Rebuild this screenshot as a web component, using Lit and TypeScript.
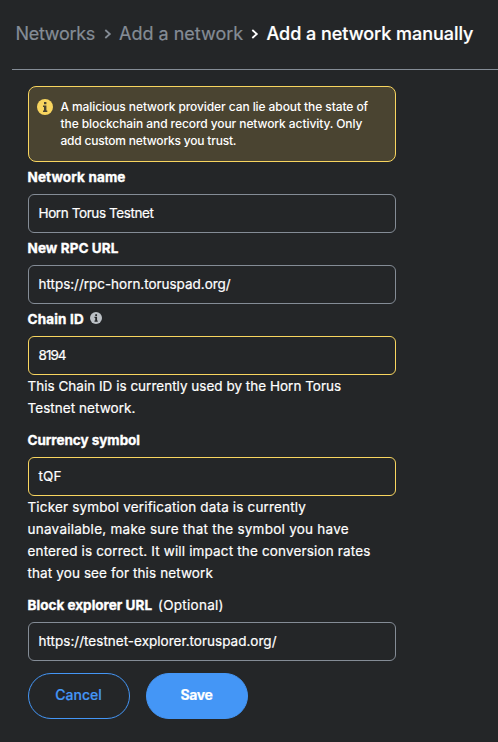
import { LitElement, html, css, svg, nothing } from "lit";

type Line = [text: string, tracking: number];

interface Field {
  label: Line;
  optional?: boolean;
  info?: boolean;
  warn?: boolean;
  value: Line;
  help?: Line[];
}

const notice: Line[] = [
  ["A malicious network provider can lie about the state of", -0.085],
  ["the blockchain and record your network activity. Only", -0.083],
  ["add custom networks you trust.", -0.2],
];

const fields: Field[] = [
  { label: ["Network name", 0.13], value: ["Horn Torus Testnet", -0.4] },
  { label: ["New RPC URL", 0.09], value: ["https://rpc-horn.toruspad.org/", -0.03] },
  {
    label: ["Chain ID", 0.18],
    info: true,
    warn: true,
    value: ["8194", -0.95],
    help: [
      ["This Chain ID is currently used by the Horn Torus", 0.01],
      ["Testnet network.", 0.05],
    ],
  },
  {
    label: ["Currency symbol", -0.04],
    warn: true,
    value: ["tQF", 0.1],
    help: [
      ["Ticker symbol verification data is currently", 0.16],
      ["unavailable, make sure that the symbol you have", 0.255],
      ["entered is correct. It will impact the conversion rates", 0.155],
      ["that you see for this network", 0.11],
    ],
  },
  {
    label: ["Block explorer URL", 0.02],
    optional: true,
    value: ["https://testnet-explorer.toruspad.org/", 0.01],
  },
];

const infoIcon = (cls: string) => html`<svg class=${cls} viewBox="0 0 16 16">
  ${svg`<circle class="disc" cx="8" cy="8" r="8"/><path class="mark" d="M7 3h2.4v2.2H7zM6 6.4h3.4v5h.9v1.7H6v-1.7h1V8H6z"/>`}
</svg>`;

const chevron = html`<svg class="chevron" viewBox="0 0 8 10">
  <path d="M1.3 1 5.8 5 1.3 9" fill="none" stroke="currentColor" stroke-width="1.8" />
</svg>`;

const line = ([text, tracking]: Line) =>
  html`<span class="line" style="letter-spacing:${tracking}px">${text}</span>`;

class AppRoot extends LitElement {
  static styles = css`
    :host {
      display: block;
      box-sizing: border-box;
      height: 742px;
      overflow: hidden;
      background: #242628;
      color: #fff;
      font: 400 13.5px/22px Inter, "Liberation Sans", sans-serif;
      -webkit-text-stroke: 0.2px currentColor;
    }
    .crumbs {
      display: flex;
      align-items: center;
      height: 69px;
      box-sizing: border-box;
      padding: 0 0 2px 15.5px;
      font-size: 18px;
      color: #848c96;
      white-space: nowrap;
    }
    .networks { width: 88px; letter-spacing: -0.29px; }
    .parent { width: 132px; letter-spacing: 0; }
    .current { color: #fff; font-weight: 500; letter-spacing: -0.04px; }
    .chevron { width: 8px; height: 10px; margin-right: 7.5px; flex: none; }
    .on { color: #fff; display: flex; }
    .rule { height: 1px; margin-left: 12px; background: #848c96; }
    .form { width: 368px; margin: 16px 0 0 28px; }
    .notice {
      display: flex;
      gap: 7.5px;
      box-sizing: border-box;
      height: 76px;
      padding: 11px 8px;
      border: 1px solid #f8d55f;
      border-radius: 8px;
      background: #4a4431;
      font-size: 12px;
      font-weight: 500;
      line-height: 17px;
      -webkit-text-stroke: 0;
    }
    .line { display: block; white-space: nowrap; }
    .notice-icon { width: 16px; height: 16px; margin-top: 1px; flex: none; }
    .notice-icon .disc { fill: #f8d55f; }
    .notice-icon .mark { fill: #4a4431; }
    .label {
      display: flex;
      height: 32px;
      box-sizing: border-box;
      padding-top: 4px;
      margin-left: -0.5px;
      font-weight: 700;
      -webkit-text-stroke: 0.35px currentColor;
    }
    .optional {
      margin-left: 6px;
      font-weight: 400;
      letter-spacing: 0.27px;
      -webkit-text-stroke: 0.2px currentColor;
    }
    .label-icon { width: 12px; height: 12px; margin: 4px 0 0 6.5px; }
    .label-icon .disc { fill: #bbc0c5; }
    .label-icon .mark { fill: #242628; }
    .box {
      height: 39px;
      box-sizing: border-box;
      padding-left: 9.5px;
      border: 1px solid #848c96;
      border-radius: 6px;
      line-height: 37px;
    }
    .warn { border-color: #f8d55f; }
    .help { padding-bottom: 6px; margin-left: -0.5px; }
    .actions { display: flex; gap: 16px; margin-top: 12px; }
    .button {
      width: 102px;
      height: 46px;
      box-sizing: border-box;
      border: 1px solid #4496f6;
      border-radius: 23px;
      background: none;
      color: #4496f6;
      font: 500 14px/42px Inter, "Liberation Sans", sans-serif;
      padding: 0 1px 2px 0;
      text-align: center;
    }
    .primary {
      background: #4496f6;
      color: #fff;
      font-weight: 700;
      letter-spacing: -0.35px;
    }
  `;

  render() {
    return html`
      <nav class="crumbs">
        <span class="networks">Networks</span>${chevron}
        <span class="parent">Add a network</span><span class="on">${chevron}</span>
        <span class="current">Add a network manually</span>
      </nav>
      <div class="rule"></div>
      <main class="form">
        <div class="notice">${infoIcon("notice-icon")}<div>${notice.map(line)}</div></div>
        ${fields.map(
          (f) => html`<div class="field">
            <div class="label">
              ${line(f.label)}
              ${f.optional ? html`<span class="optional">(Optional)</span>` : nothing}
              ${f.info ? infoIcon("label-icon") : nothing}
            </div>
            <div class="box ${f.warn ? "warn" : ""}">${line(f.value)}</div>
            ${f.help ? html`<div class="help">${f.help.map(line)}</div>` : nothing}
          </div>`,
        )}
        <div class="actions">
          <button class="button">Cancel</button>
          <button class="button primary">Save</button>
        </div>
      </main>
    `;
  }
}

customElements.define("app-root", AppRoot);
